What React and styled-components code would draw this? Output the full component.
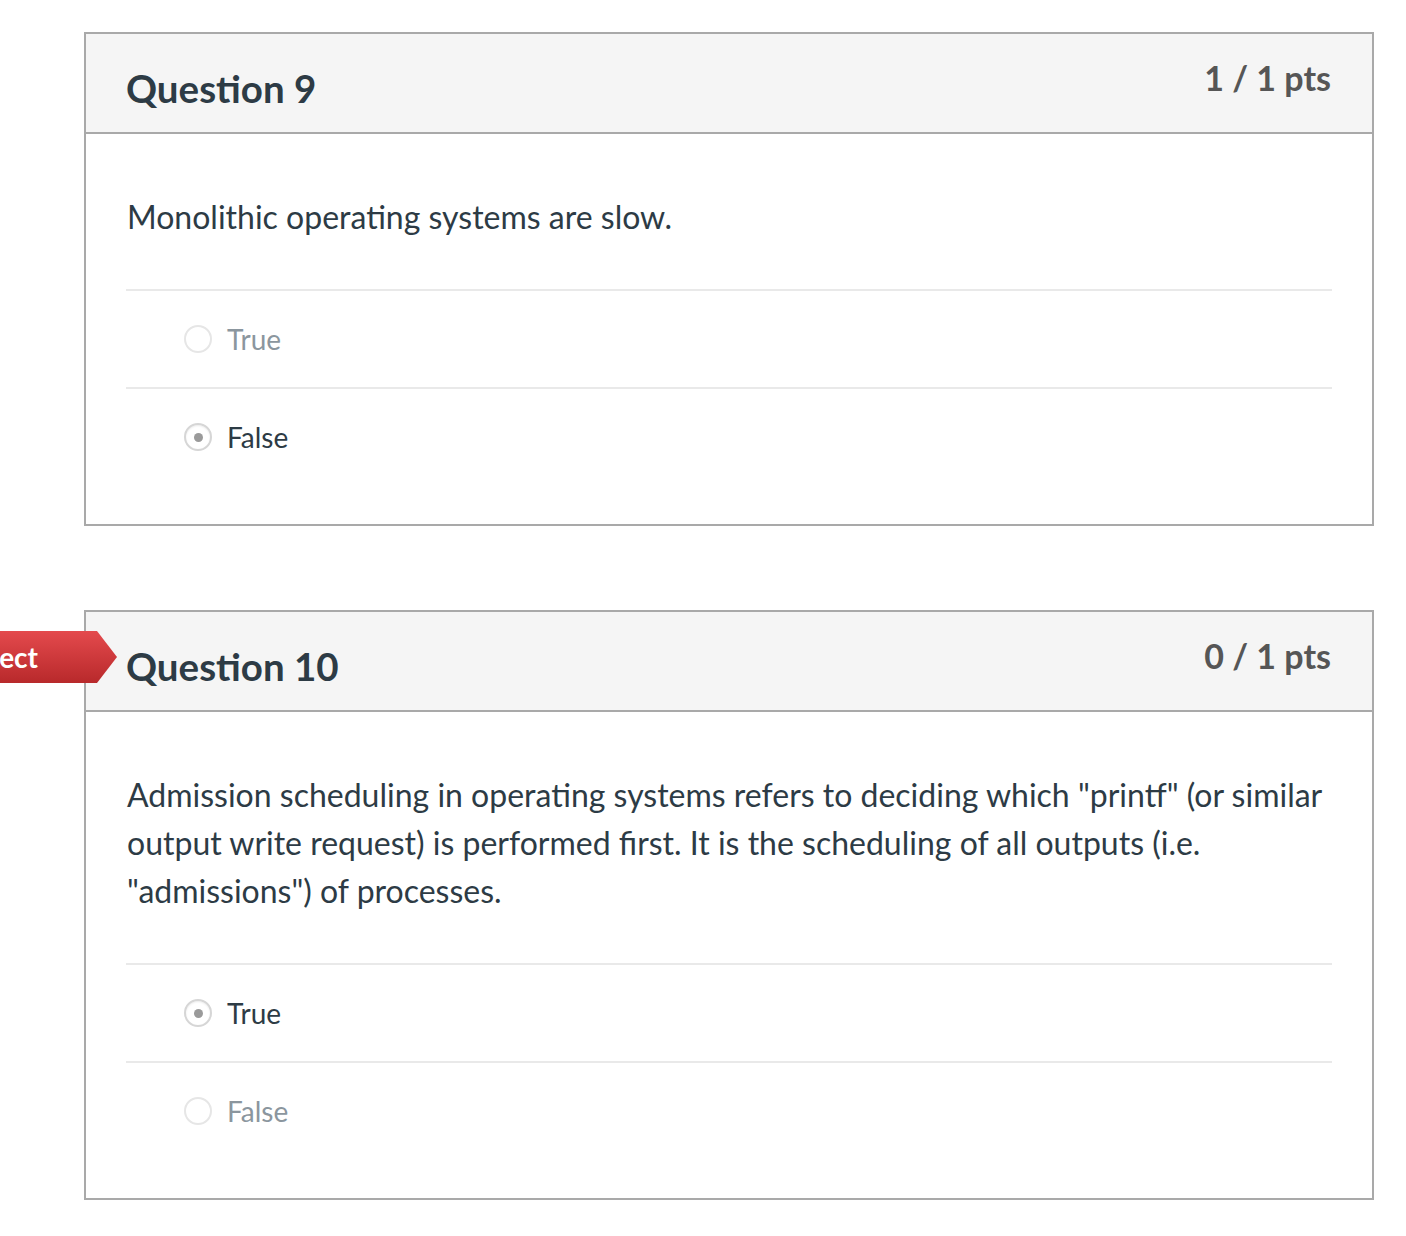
import React from 'react';
import styled, { createGlobalStyle } from 'styled-components';

const GlobalStyle = createGlobalStyle`
    body {
        margin: 0;
        background: #fff;
        font-family: Lato, "Noto Sans", sans-serif;
        color: #2d3b45;
    }
`;

const Page = styled.div`
    display: flex;
    flex-direction: column;
    gap: 84px;
    padding: 32px 0 36px 84px;
    width: 1290px;
`;

const Card = styled.section`
    position: relative;
    border: 2px solid #a9a9a9;
    background: #fff;
`;

const Header = styled.header`
    display: flex;
    justify-content: space-between;
    align-items: flex-start;
    box-sizing: border-box;
    height: 100px;
    padding: 31px 41px 0 40px;
    background: #f5f5f5;
    border-bottom: 2px solid #a9a9a9;
`;

const Title = styled.h2`
    margin: 0;
    font-size: 38.5px;
    font-weight: 700;
    line-height: 1.2;
    color: #2d3b45;
`;

const Points = styled.div`
    margin-top: -7px;
    font-size: 34px;
    font-weight: 700;
    line-height: 1.2;
    color: #565656;
`;

const Body = styled.div`
    padding: 59px 40px 39px;
`;

const Prompt = styled.p`
    margin: 0 0 48px 1px;
    font-size: 32px;
    line-height: 48px;
    color: #2d3b45;
`;

const Answer = styled.div`
    display: flex;
    align-items: center;
    gap: 15px;
    height: 96px;
    padding-left: 58px;
    border-top: 2px solid #e9e9e9;
    font-size: 28px;
    color: ${(p) => (p.$selected ? '#2d3b45' : '#8b969e')};
`;

const Radio = styled.span`
    display: flex;
    align-items: center;
    justify-content: center;
    box-sizing: border-box;
    width: 28px;
    height: 28px;
    border-radius: 50%;
    border: 2px solid ${(p) => (p.$selected ? '#d6d6d6' : '#e6e6e6')};
    box-shadow: ${(p) => (p.$selected ? 'inset 0 1px 2px rgba(0,0,0,0.08)' : 'none')};
    background: #fff;

    &::after {
        content: '';
        display: ${(p) => (p.$selected ? 'block' : 'none')};
        width: 9px;
        height: 9px;
        border-radius: 50%;
        background: #9a9a9a;
    }
`;

const Flag = styled.div`
    position: absolute;
    top: 19px;
    right: calc(100% - 31px);
    display: flex;
    align-items: center;
    height: 52px;
    padding: 0 79px 0 24px;
    background: linear-gradient(#e44a4d, #b8292b);
    clip-path: polygon(0 0, calc(100% - 20px) 0, 100% 50%, calc(100% - 20px) 100%, 0 100%);
    color: #fff;
    font-size: 28px;
    font-weight: 700;
    white-space: nowrap;
`;

const questions = [
    {
        id: 9,
        points: '1 / 1 pts',
        text: 'Monolithic operating systems are slow.',
        answers: ['True', 'False'],
        chosen: 'False',
        incorrect: false,
    },
    {
        id: 10,
        points: '0 / 1 pts',
        text:
            'Admission scheduling in operating systems refers to deciding which "printf" (or similar output write request) is performed first. It is the scheduling of all outputs (i.e. "admissions") of processes.',
        answers: ['True', 'False'],
        chosen: 'True',
        incorrect: true,
    },
];

function Question({ q }) {
    return (
        <Card>
            {q.incorrect && <Flag>Incorrect</Flag>}
            <Header>
                <Title>Question {q.id}</Title>
                <Points>{q.points}</Points>
            </Header>
            <Body>
                <Prompt>{q.text}</Prompt>
                {q.answers.map((a) => (
                    <Answer key={a} $selected={a === q.chosen}>
                        <Radio $selected={a === q.chosen} />
                        {a}
                    </Answer>
                ))}
            </Body>
        </Card>
    );
}

export default function App() {
    return (
        <>
            <GlobalStyle />
            <Page>
                {questions.map((q) => (
                    <Question key={q.id} q={q} />
                ))}
            </Page>
        </>
    );
}
